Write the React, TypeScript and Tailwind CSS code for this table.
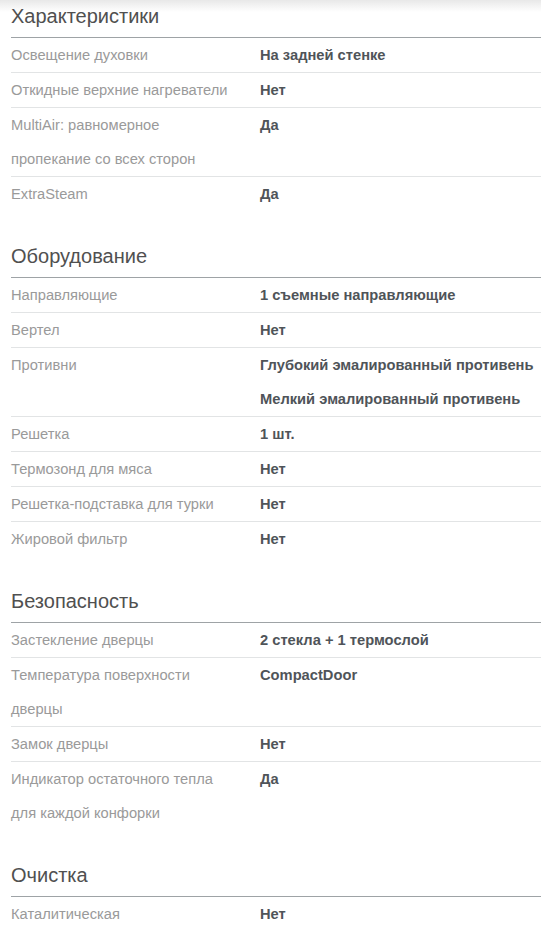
import React from "react";

type Row = { label: string; value: string[] };
type Section = { title: string; rows: Row[] };

const sections: Section[] = [
  {
    title: "Характеристики",
    rows: [
      { label: "Освещение духовки", value: ["На задней стенке"] },
      { label: "Откидные верхние нагреватели", value: ["Нет"] },
      { label: "MultiAir: равномерное пропекание со всех сторон", value: ["Да"] },
      { label: "ExtraSteam", value: ["Да"] },
    ],
  },
  {
    title: "Оборудование",
    rows: [
      { label: "Направляющие", value: ["1 съемные направляющие"] },
      { label: "Вертел", value: ["Нет"] },
      {
        label: "Противни",
        value: ["Глубокий эмалированный противень", "Мелкий эмалированный противень"],
      },
      { label: "Решетка", value: ["1 шт."] },
      { label: "Термозонд для мяса", value: ["Нет"] },
      { label: "Решетка-подставка для турки", value: ["Нет"] },
      { label: "Жировой фильтр", value: ["Нет"] },
    ],
  },
  {
    title: "Безопасность",
    rows: [
      { label: "Застекление дверцы", value: ["2 стекла + 1 термослой"] },
      { label: "Температура поверхности дверцы", value: ["CompactDoor"] },
      { label: "Замок дверцы", value: ["Нет"] },
      { label: "Индикатор остаточного тепла для каждой конфорки", value: ["Да"] },
    ],
  },
  {
    title: "Очистка",
    rows: [{ label: "Каталитическая", value: ["Нет"] }],
  },
];

const App: React.FC = () => {
  return (
    <div className="min-h-[949px] bg-white bg-[linear-gradient(to_bottom,#e8e8e8,#ffffff_12px)] bg-no-repeat pl-[11px] font-['Liberation_Sans',Arial,sans-serif]">
      {sections.map((section, i) => (
        <section key={i} className={i === 0 ? "" : "mt-[29px]"}>
          {/* Section heading */}
          <h2 className="border-b border-[#9ea3a6] pt-[2px] pb-[7px] text-[20px] leading-[28px] text-[#505050]">
            {section.title}
          </h2>
          {section.rows.map((row, j) => (
            <div
              key={j}
              className="grid grid-cols-[249px_1fr] border-b border-[#e2e4e5] text-[14.7px] leading-[34px] last:border-b-0"
            >
              <div className="pr-[18px] text-[#9a9a9a]">{row.label}</div>
              <div className="font-bold text-[#4f5459]">
                {row.value.map((v, k) => (
                  <div key={k}>{v}</div>
                ))}
              </div>
            </div>
          ))}
        </section>
      ))}
    </div>
  );
};

export default App;
